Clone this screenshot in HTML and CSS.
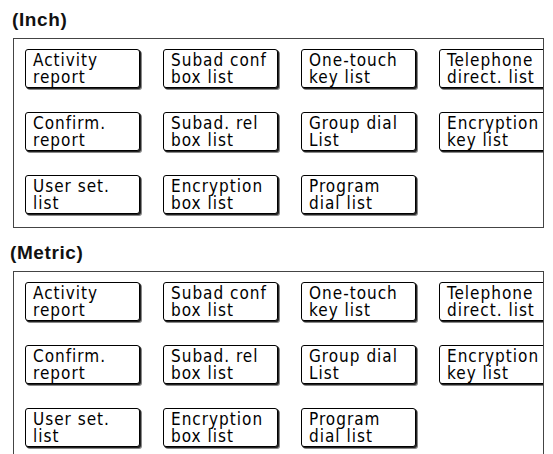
FILE: index.html
```html
<!DOCTYPE html>
<html>
<head>
<meta charset="utf-8">
<link rel="stylesheet" href="styles.css">
</head>
<body>
<section class="group">
  <h2 class="title">(Inch)</h2>
  <div class="panel">
    <div class="grid">
      <div class="key">Activity<br>report</div>
      <div class="key">Subad conf<br>box list</div>
      <div class="key">One-touch<br>key list</div>
      <div class="key">Telephone<br>direct. list</div>
      <div class="key">Confirm.<br>report</div>
      <div class="key">Subad. rel<br>box list</div>
      <div class="key">Group dial<br>List</div>
      <div class="key">Encryption<br>key list</div>
      <div class="key">User set.<br>list</div>
      <div class="key">Encryption<br>box list</div>
      <div class="key">Program<br>dial list</div>
    </div>
  </div>
</section>
<section class="group second">
  <h2 class="title">(Metric)</h2>
  <div class="panel">
    <div class="grid">
      <div class="key">Activity<br>report</div>
      <div class="key">Subad conf<br>box list</div>
      <div class="key">One-touch<br>key list</div>
      <div class="key">Telephone<br>direct. list</div>
      <div class="key">Confirm.<br>report</div>
      <div class="key">Subad. rel<br>box list</div>
      <div class="key">Group dial<br>List</div>
      <div class="key">Encryption<br>key list</div>
      <div class="key">User set.<br>list</div>
      <div class="key">Encryption<br>box list</div>
      <div class="key">Program<br>dial list</div>
    </div>
  </div>
</section>
</body>
</html>
```
FILE: styles.css
```css
html, body {
  margin: 0;
  padding: 0;
  background: #fff;
  overflow: hidden;
}
body {
  padding: 9px 10px 0 13px;
  width: 553px;
  box-sizing: border-box;
}
.group.second {
  margin-top: 14px;
}
.title {
  margin: 0 0 7px -1px;
  font-family: "Liberation Sans", Arial, sans-serif;
  font-weight: bold;
  font-size: 19px;
  line-height: 22px;
  letter-spacing: 0.6px;
  color: #111;
}
.group.second .title {
  margin-left: -3px;
}
.panel {
  width: 531px;
  box-sizing: border-box;
  border: 1px solid #444;
  padding: 10px 0 11px 11px;
  overflow: hidden;
}
.grid {
  display: grid;
  grid-template-columns: repeat(4, 117px);
  grid-auto-rows: 41px;
  column-gap: 21px;
  row-gap: 22px;
  width: 531px;
}
.key {
  width: 115px;
  height: 39px;
  box-sizing: border-box;
  border: 1px solid #000;
  border-radius: 3px;
  box-shadow: 1px 1px 0 #222, 2px 2px 0 #888;
  background: #fff;
  padding: 2px 0 0 7px;
  font-family: "DejaVu Sans Condensed", "DejaVu Sans", sans-serif;
  font-stretch: condensed;
  font-size: 17px;
  line-height: 17px;
  letter-spacing: 1px;
  color: #000;
  white-space: nowrap;
}
```
